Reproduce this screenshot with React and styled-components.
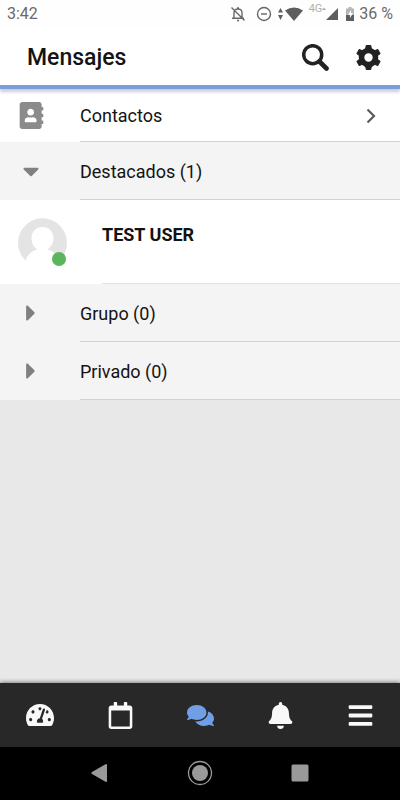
import React from "react";
import styled, { createGlobalStyle } from "styled-components";
import {
  FaAddressBook,
  FaCaretDown,
  FaCaretRight,
  FaTachometerAlt,
  FaRegCalendar,
  FaComments,
  FaBell,
  FaBars,
} from "react-icons/fa";

const GlobalStyle = createGlobalStyle`
  * { box-sizing: border-box; }
  body { margin: 0; background: #e8e8e8; font-family: Roboto, sans-serif; color: #131313; }
  button { border: 0; padding: 0; background: none; color: inherit; font: inherit; cursor: pointer; }
  svg { display: block; flex: none; }
`;

const Screen = styled.div`
  display: flex;
  flex-direction: column;
  min-height: 100vh;
`;

const StatusBar = styled.div`
  display: flex;
  justify-content: space-between;
  align-items: center;
  height: 28px;
  padding: 0 7px;
  background: #fefefe;
  color: #6a6a6a;
  font-size: 16px;
  line-height: 28px;
`;

const StatusIcons = styled.div`
  display: flex;
  align-items: center;
`;

const StatusGlyph = styled.svg`
  margin-right: ${(p) => p.$gap || 0}px;
`;

const Network = styled.span`
  align-self: flex-start;
  color: #b0b0b0;
  font-size: 11px;
  line-height: 17px;
`;

const Header = styled.header`
  position: relative;
  display: flex;
  align-items: center;
  justify-content: space-between;
  height: 61px;
  padding: 2px 18px 0 27px;
  background: #fff;
  border-bottom: 4px solid #7a9ddb;
  box-shadow: 0 3px 3px rgba(40, 60, 90, 0.25);
`;

const Title = styled.h1`
  margin: 0;
  padding-top: 1px;
  font-size: 23px;
  line-height: 28px;
  font-weight: 500;
`;

const Actions = styled.div`
  display: flex;
  gap: 26px;
  color: #222;
`;

const Row = styled.button`
  display: flex;
  width: 100%;
  height: ${(p) => (p.$plain ? "53px" : "58px")};
  background: ${(p) => (p.$plain ? "#fff" : "#f4f4f4")};
  text-align: left;
`;

const RowIcon = styled.span`
  display: flex;
  align-items: center;
  align-self: stretch;
  width: 80px;
  padding-left: 18px;
  color: ${(p) => (p.$dark ? "#808080" : "#8b8b8b")};
`;

const RowText = styled.span`
  display: flex;
  flex: 1;
  align-items: center;
  justify-content: space-between;
  align-self: stretch;
  padding: 2px 23px 0 0;
  border-bottom: 1px solid #d2d2d2;
  font-size: 18px;
  line-height: 24px;
`;

const Contact = styled.button`
  display: flex;
  width: 100%;
  height: 84px;
  padding-left: 18px;
  background: #fff;
  text-align: left;
`;

const Avatar = styled.span`
  position: relative;
  width: 49px;
  height: 49px;
  margin: 18px 35px 0 0;
`;

const Presence = styled.span`
  position: absolute;
  right: 1px;
  bottom: 1px;
  width: 14px;
  height: 14px;
  border-radius: 50%;
  background: #5ab55c;
`;

const ContactName = styled.span`
  flex: 1;
  align-self: stretch;
  padding-top: 23px;
  border-bottom: 1px solid #e0e0e0;
  font-size: 18px;
  line-height: 24px;
  font-weight: 700;
`;

const Tabs = styled.nav`
  display: grid;
  grid-template-columns: repeat(5, 1fr);
  height: 64px;
  margin-top: auto;
  background: #282828;
  box-shadow: 0 -1px 4px rgba(0, 0, 0, 0.45);
`;

const Tab = styled.button`
  display: grid;
  place-items: center;
  && { color: ${(p) => (p.$active ? "#719fe6" : "#f8f8f8")}; }
`;

const SystemBar = styled.div`
  display: flex;
  justify-content: center;
  gap: 74px;
  height: 53px;
  padding-bottom: 1px;
  background: #000;
`;

const SystemButton = styled.button`
  display: grid;
  place-items: center;
`;

const tabs = [
  ["Panel", FaTachometerAlt, 28],
  ["Calendario", FaRegCalendar, 27],
  ["Mensajes", FaComments, 27],
  ["Notificaciones", FaBell, 27],
  ["Más", FaBars, 27],
];

const toothAngles = [0, 60, 120, 180, 240, 300];

function SearchIcon() {
  return (
    <svg width="27" height="27" viewBox="0 0 27 27" fill="none" stroke="currentColor">
      <circle cx="10.700" cy="10.700" r="9" strokeWidth="3.500" />
      <path d="M17.500 17.500l7 7" strokeWidth="4.600" strokeLinecap="round" />
    </svg>
  );
}

function GearIcon() {
  return (
    <svg width="27" height="27" viewBox="0 0 27 27" fill="none" stroke="currentColor">
      <circle cx="13.500" cy="13.500" r="7" strokeWidth="5.600" />
      {toothAngles.map((a) => (
        <path
          key={a}
          d="M10.500 6L11.200 1.500h4.600L16.500 6z"
          fill="currentColor"
          strokeWidth="1"
          strokeLinejoin="round"
          transform={`rotate(${a} 13.500 13.500)`}
        />
      ))}
    </svg>
  );
}

function Group({ label, open }) {
  return (
    <Row aria-expanded={!!open}>
      <RowIcon $dark>
        {open ? <FaCaretDown size={26} /> : <FaCaretRight size={26} />}
      </RowIcon>
      <RowText>{label}</RowText>
    </Row>
  );
}

export default function App() {
  return (
    <Screen>
      <GlobalStyle />
      <StatusBar>
        <span>3:42</span>
        <StatusIcons>
          <StatusGlyph $gap={10} width="16" height="16" viewBox="0 0 16 16" fill="none" stroke="#686868" strokeWidth="1.4">
            <path d="M4 12V7c0-2.300 1.500-4 4-4s4 1.700 4 4v5M2 12.300h12M7 2h2M7 14.500h2M1.500 1.500l13 13" />
          </StatusGlyph>
          <StatusGlyph $gap={6} width="16" height="16" viewBox="0 0 16 16" fill="none" stroke="#686868" strokeWidth="1.4">
            <circle cx="8" cy="8" r="6.500" />
            <path d="M5 8h6" />
          </StatusGlyph>
          <StatusGlyph $gap={2} width="5" height="12" viewBox="0 0 5 12" fill="#606060">
            <path d="M2.500 0L5 4.500H0zM2.500 12L0 7h5z" />
          </StatusGlyph>
          <StatusGlyph $gap={6} width="18" height="14" viewBox="0 0 18 14" fill="#5e5e5e">
            <path d="M0 3.500Q9-2.500 18 3.500L9 14z" />
          </StatusGlyph>
          <Network>4G</Network>
          <StatusGlyph width="4" height="16" viewBox="0 0 4 16" fill="#aaa">
            <path d="M0 4l2-2.500L4 4z" />
          </StatusGlyph>
          <StatusGlyph $gap={8} width="12" height="12" viewBox="0 0 12 12" fill="#5e5e5e">
            <path d="M12 0v12H0z" />
          </StatusGlyph>
          <StatusGlyph $gap={5} width="8" height="14" viewBox="0 0 8 14">
            <path d="M2.500 0h3v1.500H8V14H0V1.500h2.500z" fill="#b5b5b5" />
            <path d="M0 8h8v6H0z" fill="#5e5e5e" />
            <path d="M5 3L2 8h2v3l3-5H5z" fill="#fff" />
          </StatusGlyph>
          <span>36 %</span>
        </StatusIcons>
      </StatusBar>

      <Header>
        <Title>Mensajes</Title>
        <Actions>
          <button aria-label="Buscar"><SearchIcon /></button>
          <button aria-label="Ajustes"><GearIcon /></button>
        </Actions>
      </Header>

      <main>
        <Row $plain>
          <RowIcon><FaAddressBook size={27} /></RowIcon>
          <RowText>
            Contactos
            <svg width="12" height="16" viewBox="0 0 12 16" fill="none" stroke="#5c5c5c" strokeWidth="2.200">
              <path d="M2.500 1.500l6.500 6.500L2.500 14.500" />
            </svg>
          </RowText>
        </Row>
        <Group label="Destacados (1)" open />
        <Contact>
          <Avatar>
            <svg width="49" height="49" viewBox="0 0 49 49">
              <path d="M7.500 42.500A24.500 24.500 0 1 1 41.500 42.500Q38 34 29.500 31.500C33 29 35.500 25 35.500 20.500C35.500 13.500 31 9 24.500 9S13.500 13.500 13.500 20.500C13.500 25 15.500 29 19 31.500Q10.500 34 7.500 42.500z" fill="#e4e4e4" />
            </svg>
            <Presence />
          </Avatar>
          <ContactName>TEST USER</ContactName>
        </Contact>
        <Group label="Grupo (0)" />
        <Group label="Privado (0)" />
      </main>

      <Tabs>
        {tabs.map(([label, Icon, size]) => (
          <Tab key={label} aria-label={label} $active={label === "Mensajes"}>
            <Icon size={size} />
          </Tab>
        ))}
      </Tabs>
      <SystemBar>
        <SystemButton aria-label="Atrás">
          <svg width="26" height="26" viewBox="0 0 26 26" fill="#999">
            <path d="M20 5v16q0 1.500-1.500.8L5 14q-1.500-1 0-2L18.500 4.200Q20 3.500 20 5z" />
          </svg>
        </SystemButton>
        <SystemButton aria-label="Inicio">
          <svg width="26" height="26" viewBox="0 0 26 26" fill="#999">
            <circle cx="13" cy="13" r="8" />
            <circle cx="13" cy="13" r="11.500" fill="none" stroke="#999" strokeWidth="1.300" />
          </svg>
        </SystemButton>
        <SystemButton aria-label="Recientes">
          <svg width="26" height="26" viewBox="0 0 26 26" fill="#999">
            <rect x="4.500" y="4.500" width="17" height="17" rx="1.500" />
          </svg>
        </SystemButton>
      </SystemBar>
    </Screen>
  );
}
